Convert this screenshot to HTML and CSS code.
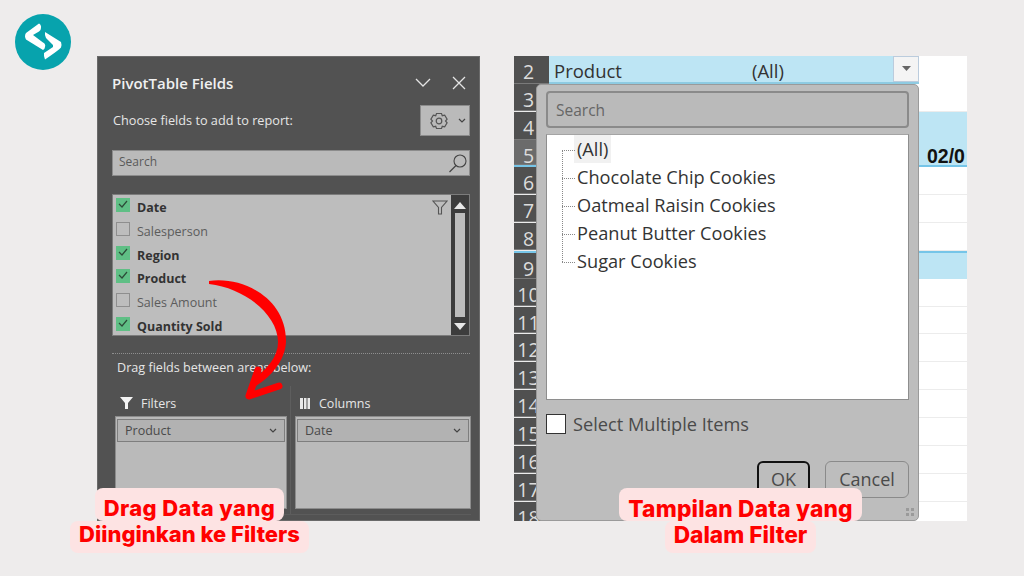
FILE: index.html
```html
<!DOCTYPE html>
<html lang="en">
<head>
    <meta charset="UTF-8">
    <title>Drag Data ke Filters</title>
    <link rel="stylesheet" href="styles.css">
</head>
<body>
<div class="slide">

    <!-- Logo -->
    <svg class="logo" width="56" height="56" viewBox="0 0 56 56">
        <circle cx="28" cy="28" r="28" fill="#07a3ad"/>
        <path d="M24 9.500Q26.500 11 26 14Q26 16 24 17.500L18 21L28 28.500Q31 30 30 33Q29.500 36 28 36L11 25.500Q9 22 11 19Z" fill="#fff"/>
        <path d="M30 18L46 28Q47 31 46 33.500Q44 36 30 45.500Q28.500 42 29 39L38 33L38 31L31 24Q29.500 21 30 18Z" fill="#fff"/>
    </svg>

    <!-- PivotTable panel -->
    <section class="pivot">
        <div class="pivot-head">
            <h1>PivotTable Fields</h1>
            <svg width="16" height="10" viewBox="0 0 16 10"><path d="M1 1l7 7 7-7" fill="none" stroke="#e4e4e4" stroke-width="1.3"/></svg>
            <svg class="close-icon" width="14" height="14" viewBox="0 0 14 14"><path d="M1 1l12 12M13 1L1 13" fill="none" stroke="#e4e4e4" stroke-width="1.3"/></svg>
        </div>

        <div class="choose-row">
            <span>Choose fields to add to report:</span>
            <div class="gear-btn">
                <svg width="20" height="20" viewBox="0 0 20 20"><path d="M7.500 2.500h5l.8 2.200 2.400-.5 2.400 3.900-1.600 1.900 1.600 1.900-2.400 3.900-2.400-.5-.8 2.200h-5l-.8-2.200-2.400.5L1.900 11.900 3.500 10 1.900 8.100 4.300 4.200l2.400.5z" fill="none" stroke="#555" stroke-width="1.200"/><circle cx="10" cy="10" r="2.800" fill="none" stroke="#555" stroke-width="1.200"/></svg>
                <svg width="8" height="5" viewBox="0 0 8 5"><path d="M1 1l3 3 3-3" fill="none" stroke="#444" stroke-width="1.200"/></svg>
            </div>
        </div>

        <div class="search-box">
            <span>Search</span>
            <svg width="20" height="20" viewBox="0 0 20 20"><circle cx="12" cy="8" r="6" fill="none" stroke="#444" stroke-width="1.100"/><path d="M8 12.500L1.500 19" stroke="#444" stroke-width="1.200"/></svg>
        </div>

        <div class="field-list">
            <div class="fields">
                <div class="field on"><i class="check"><svg width="14" height="14" viewBox="0 0 14 14"><path d="M3 6l3 3 5-6" fill="none" stroke="#2d4a38" stroke-width="1.200"/></svg></i>Date</div>
                <div class="field"><i class="check"></i>Salesperson</div>
                <div class="field on"><i class="check"><svg width="14" height="14" viewBox="0 0 14 14"><path d="M3 6l3 3 5-6" fill="none" stroke="#2d4a38" stroke-width="1.200"/></svg></i>Region</div>
                <div class="field on"><i class="check"><svg width="14" height="14" viewBox="0 0 14 14"><path d="M3 6l3 3 5-6" fill="none" stroke="#2d4a38" stroke-width="1.200"/></svg></i>Product</div>
                <div class="field"><i class="check"></i>Sales Amount</div>
                <div class="field on"><i class="check"><svg width="14" height="14" viewBox="0 0 14 14"><path d="M3 6l3 3 5-6" fill="none" stroke="#2d4a38" stroke-width="1.200"/></svg></i>Quantity Sold</div>
                <svg class="funnel" width="16" height="15" viewBox="0 0 16 15"><path d="M1 1h14L9.500 7.500V14h-3V7.500z" fill="none" stroke="#555" stroke-width="1.100"/></svg>
            </div>
            <div class="scrollbar">
                <svg width="12" height="7" viewBox="0 0 12 7"><path d="M6 0l6 7H0z" fill="#e8e8e8"/></svg>
                <div class="thumb"></div>
                <svg width="12" height="7" viewBox="0 0 12 7"><path d="M0 0h12L6 7z" fill="#e8e8e8"/></svg>
            </div>
        </div>

        <div class="dotted"></div>
        <p class="drag-text">Drag fields between areas below:</p>

        <div class="areas">
            <div class="area">
                <div class="area-title">
                    <svg width="13" height="12" viewBox="0 0 13 12"><path d="M0 0h13L8 6v6H5V6z" fill="#f4f4f4"/></svg>
                    Filters
                </div>
                <div class="drop">
                    <div class="pill">Product<svg width="8" height="5" viewBox="0 0 8 5"><path d="M1 1l3 3 3-3" fill="none" stroke="#444" stroke-width="1.200"/></svg></div>
                </div>
            </div>
            <div class="area">
                <div class="area-title">
                    <svg width="10" height="11" viewBox="0 0 10 11"><path d="M0 0h3v11H0zM4 0h2.500v11H4zM7.500 0H10v11H7.500z" fill="#e8e8e8"/></svg>
                    Columns
                </div>
                <div class="drop">
                    <div class="pill">Date<svg width="8" height="5" viewBox="0 0 8 5"><path d="M1 1l3 3 3-3" fill="none" stroke="#444" stroke-width="1.200"/></svg></div>
                </div>
            </div>
        </div>
    </section>

    <!-- Spreadsheet with filter dropdown -->
    <section class="sheet">
        <div class="row row-2"><b>2</b><div class="cell-product"><span>Product</span><span class="all">(All)</span><span class="drop-btn"><svg width="9" height="5" viewBox="0 0 9 5"><path d="M0 0h9L4.500 5z" fill="#666"/></svg></span></div></div>
        <div class="row"><b>3</b></div>
        <div class="row blue"><b>4</b></div>
        <div class="row blue line"><b class="lit">5</b><span class="date">02/0</span></div>
        <div class="row"><b>6</b></div>
        <div class="row"><b>7</b></div>
        <div class="row"><b>8</b></div>
        <div class="row blue top"><b>9</b></div>
        <div class="row"><b>10</b></div>
        <div class="row"><b>11</b></div>
        <div class="row"><b>12</b></div>
        <div class="row"><b>13</b></div>
        <div class="row"><b>14</b></div>
        <div class="row"><b>15</b></div>
        <div class="row"><b>16</b></div>
        <div class="row"><b>17</b></div>
        <div class="row"><b>18</b></div>

        <div class="dialog">
            <div class="dlg-search">Search</div>
            <div class="tree">
                <div class="tree-item"><span class="hl">(All)</span></div>
                <div class="tree-item">Chocolate Chip Cookies</div>
                <div class="tree-item">Oatmeal Raisin Cookies</div>
                <div class="tree-item">Peanut Butter Cookies</div>
                <div class="tree-item last">Sugar Cookies</div>
            </div>
            <label class="multi"><i></i>Select Multiple Items</label>
            <div class="dlg-btns">
                <span class="btn ok">OK</span>
                <span class="btn">Cancel</span>
            </div>
            <div class="grip"></div>
        </div>
    </section>

    <!-- Red arrow -->
    <svg class="arrow" width="100" height="135" viewBox="0 0 100 135">
        <path d="M9 11C45 6 87 30 86 72C85 90 72 106 56 116L51 111C66 100 78 88 78 72C78 45 45 18 9 14Z" fill="#ff0000"/>
        <path d="M58 100L49 126L79 116" fill="none" stroke="#ff0000" stroke-width="7" stroke-linecap="round" stroke-linejoin="round"/>
    </svg>

    <!-- Captions -->
    <div class="caption cap-left">
        <span class="l1">Drag Data yang</span>
        <span class="l2">Diinginkan ke Filters</span>
    </div>
    <div class="caption cap-right">
        <span class="l1">Tampilan Data yang</span>
        <span class="l2">Dalam Filter</span>
    </div>

</div>
</body>
</html>
```

FILE: styles.css
```css
* {
    box-sizing: border-box;
}

body {
    margin: 0;
    background: #eeecec;
    font-family: "Open Sans", "Noto Sans", sans-serif;
}

.slide {
    position: relative;
    width: 1024px;
    height: 576px;
    padding: 56px 0 0 97px;
    display: flex;
    align-items: flex-start;
    gap: 34px;
    overflow: hidden;
}

.logo {
    position: absolute;
    left: 15px;
    top: 14px;
}

/* Pivot panel */
.pivot {
    width: 383px;
    height: 465px;
    background: #525252;
    border: 1px solid #6a6a6a;
    padding: 13px 9px 0 14px;
    color: #e6e6e6;
}

.pivot-head {
    display: flex;
    align-items: center;
    height: 26px;
    padding-right: 4px;
}

.pivot-head h1 {
    flex: 1;
    margin: 0;
    font-size: 15px;
    font-weight: 600;
    color: #f0f0f0;
}

.close-icon {
    margin-left: 21px;
}

.choose-row {
    display: flex;
    justify-content: space-between;
    align-items: center;
    height: 31px;
    margin-top: 9px;
    padding-left: 1px;
    font-size: 12.700px;
}

.choose-row span {
    margin-top: -2px;
}

.gear-btn {
    width: 50px;
    height: 31px;
    background: #bababa;
    border: 1px solid #8c8c8c;
    display: flex;
    align-items: center;
    padding-left: 8px;
    gap: 9px;
}

.search-box {
    display: flex;
    justify-content: space-between;
    align-items: center;
    height: 26px;
    margin-top: 14px;
    background: #bababa;
    border: 1px solid #8c8c8c;
    padding: 0 1px 0 6px;
    font-size: 12px;
    color: #5a5a5a;
}

.search-box span {
    margin-top: -3px;
}

.field-list {
    display: flex;
    height: 142px;
    margin-top: 18px;
    border: 1px solid #7c7c7c;
}

.fields {
    position: relative;
    flex: 1;
    background: #bdbdbd;
    padding: 1px 0 0 3px;
    overflow: hidden;
}

.field {
    display: flex;
    align-items: flex-start;
    height: 23.800px;
    font-size: 12.500px;
    color: #5c5c5c;
    line-height: 24px;
}

.field.on {
    font-weight: 700;
    color: #333;
}

.check {
    width: 14px;
    height: 14px;
    margin: 2px 7px 0 0;
    border: 1px solid #8e8e8e;
    display: block;
    flex: none;
}

.field.on .check {
    background: #5fbf85;
    border-color: #5fbf85;
}

.check svg {
    display: block;
    margin: -1px;
}

.funnel {
    position: absolute;
    right: 3px;
    top: 5px;
}

.scrollbar {
    width: 18px;
    background: #3d3d3d;
    display: flex;
    flex-direction: column;
    align-items: center;
    padding: 7px 0 5px;
}

.thumb {
    flex: 1;
    width: 10px;
    background: #bdbdbd;
    margin: 4px 0 6px;
}

.dotted {
    height: 1px;
    margin-top: 17px;
    border-top: 1px dotted #8e8e8e;
}

.drag-text {
    margin: 5px 0 0 5px;
    font-size: 12.600px;
    line-height: 18px;
}

.areas {
    display: flex;
    gap: 8px;
    margin: 17px -1px 0 3px;
    padding-bottom: 5px;
    border-bottom: 1px solid #5c5c5c;
}

.area {
    position: relative;
    flex: 1;
}

.area:last-child {
    flex: 0 0 176px;
}

.area:last-child::before {
    content: "";
    position: absolute;
    left: -5px;
    top: -8px;
    bottom: -5px;
    border-left: 1px solid #5e5e5e;
}

.area-title {
    display: flex;
    align-items: center;
    gap: 8px;
    height: 18px;
    padding-left: 5px;
    font-size: 12.500px;
    margin-bottom: 4px;
}

.area:last-child .area-title {
    gap: 9px;
}

.drop {
    height: 93px;
    background: #bababa;
    border: 1px solid #8c8c8c;
    padding: 2px 1px;
}

.pill {
    display: flex;
    justify-content: space-between;
    align-items: center;
    height: 23px;
    background: #b2b2b2;
    border: 1px solid #7e7e7e;
    padding: 0 7px;
    font-size: 12.500px;
    color: #4a4a4a;
}

/* Sheet */
.sheet {
    position: relative;
    width: 453px;
    height: 465px;
    background: #fff;
    overflow: hidden;
}

.row {
    position: relative;
    display: flex;
    height: 27.850px;
    border-bottom: 1px solid #ececec;
    align-items: center;
    justify-content: flex-end;
}

.row b {
    position: absolute;
    left: 0;
    top: 0;
    width: 35px;
    height: 100%;
    padding: 2px 6px 0 0;
    background: #505050;
    border-bottom: 1px solid #7a7a7a;
    color: #dcdcdc;
    font-size: 19.500px;
    font-weight: 400;
    line-height: 27px;
    text-align: center;
    white-space: nowrap;
}

.row b.lit {
    background: #6b6b6b;
}

.row-2 {
    justify-content: flex-start;
    padding-left: 35px;
    border-bottom: 0;
}

.cell-product {
    display: flex;
    align-items: center;
    width: 370px;
    height: 100%;
    background: #bde5f4;
    border-bottom: 2px solid #8ecbe2;
    padding-left: 5px;
    font-size: 18.500px;
    color: #333;
}

.cell-product span:not(.drop-btn) {
    margin-top: 3px;
}

.all {
    margin-left: 130px;
    flex: 1;
}

.drop-btn {
    display: flex;
    align-items: center;
    justify-content: center;
    width: 26px;
    height: 26px;
    background: #f4f4f4;
    border: 1px solid #bcd;
}

.blue {
    background: #bde5f4;
    border-bottom: 0;
}

.line {
    border-bottom: 2px solid #76c5e8;
}

.top {
    border-top: 2px solid #76c5e8;
}

.date {
    font-family: "Liberation Sans", sans-serif;
    font-weight: 700;
    font-size: 19.500px;
    color: #111;
    margin: 8px 0 0 0;
    width: 40px;
    white-space: nowrap;
    overflow: hidden;
}

/* Filter dropdown */
.dialog {
    position: absolute;
    left: 22px;
    top: 28px;
    width: 383px;
    height: 437px;
    background: #bdbdbd;
    border: 1px solid #9a9a9a;
    border-radius: 5px;
    padding: 6px 9px 0 9px;
}

.dlg-search {
    height: 37px;
    background: #bababa;
    border: 2px solid #8a8a8a;
    border-radius: 4px;
    padding-left: 8px;
    font-size: 15.500px;
    line-height: 34px;
    color: #666;
}

.tree {
    height: 266px;
    margin-top: 6px;
    background: #fff;
    border: 1px solid #8e8e8e;
    border-top-color: #a4a4a4;
    padding: 0 0 0 30px;
    font-size: 18.200px;
    color: #333;
}

.tree-item {
    position: relative;
    height: 28px;
    line-height: 28px;
}

.tree-item::before {
    content: "";
    position: absolute;
    left: -15px;
    top: 15px;
    width: 13px;
    border-top: 1px dotted #888;
}

.tree-item::after {
    content: "";
    position: absolute;
    left: -15px;
    top: 15px;
    height: 28px;
    border-left: 1px dotted #888;
}

.tree-item.last::after {
    display: none;
}

.hl {
    display: inline-block;
    background: #f1f1f1;
    padding: 0 3px;
    margin-left: -3px;
}

.multi {
    display: flex;
    align-items: center;
    gap: 7px;
    margin-top: 13px;
    font-size: 18.200px;
    color: #4a4a4a;
    line-height: 22px;
}

.multi i {
    width: 20px;
    height: 20px;
    background: #fff;
    border: 1px solid #333;
}

.dlg-btns {
    display: flex;
    justify-content: flex-end;
    gap: 15px;
    margin-top: 26px;
}

.btn {
    width: 84px;
    height: 37px;
    border: 1px solid #8a8a8a;
    border-radius: 6px;
    text-align: center;
    font-size: 18px;
    line-height: 35px;
    color: #4a4a4a;
}

.btn.ok {
    width: 53px;
    border: 2px solid #111;
    line-height: 33px;
}

.grip {
    position: absolute;
    right: 3px;
    bottom: 3px;
    width: 10px;
    height: 10px;
    background: radial-gradient(circle, #9a9a9a 1.500px, transparent 2px) 0 0 / 5px 5px;
}

/* Annotation */
.arrow {
    position: absolute;
    left: 200px;
    top: 270px;
}

.caption {
    position: absolute;
    top: 488px;
    display: flex;
    flex-direction: column;
    align-items: center;
    color: #ff0000;
    font-family: Inter, "Open Sans", sans-serif;
    font-weight: 800;
    font-size: 22px;
    line-height: 25px;
}

.caption span {
    background: #fde3e3;
    border-radius: 8px;
    padding: 1px 9px;
    white-space: nowrap;
}

.caption .l1 {
    padding-top: 8px;
    padding-bottom: 0;
}

.caption .l2 {
    padding-bottom: 6px;
}

.cap-left {
    left: 70px;
    width: 239px;
}

.cap-left .l1 {
    letter-spacing: 0.4px;
}

.cap-right {
    left: 619px;
    width: 243px;
    font-size: 22.700px;
}

.cap-right .l1 {
    letter-spacing: 0.2px;
}
```
